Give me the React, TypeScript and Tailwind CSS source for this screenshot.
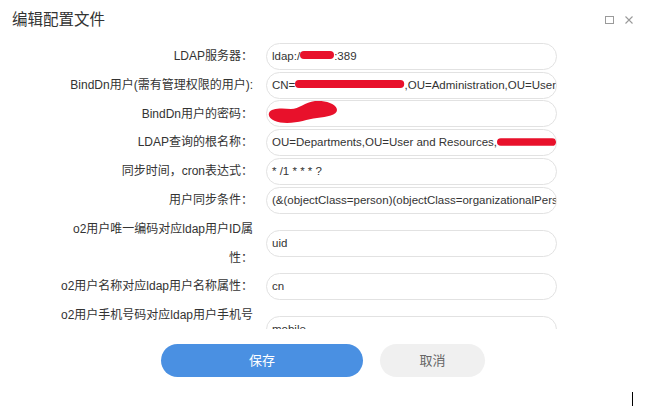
import type { ReactNode } from "react";

type Field = {
  label: string;
  value: ReactNode;
};

const Redact = ({ w }: { w: number }) => (
  <svg width={w} height="10" viewBox={`0 0 ${w} 10`} className="inline-block align-middle -mt-[2px]">
    <rect x="0" y="1" width={w} height="8" rx="4" fill="#e8112b" />
  </svg>
);

const Swoosh = () => (
  <svg width="72" height="26" viewBox="0 0 72 26" className="absolute left-[0px] top-[-2px]">
    <path
      d="M2 14 C 4 9, 14 9, 24 10 C 32 10, 38 3, 48 2 C 58 1, 70 5, 70 11 C 70 16, 60 18, 50 19 C 40 20, 32 24, 20 24 C 10 24, 0 20, 2 14 Z"
      fill="#e8112b"
    />
  </svg>
);

const FIELDS: Field[] = [
  {
    label: "LDAP服务器：",
    value: (
      <>
        ldap:/<Redact w={34} />:389
      </>
    ),
  },
  {
    label: "BindDn用户(需有管理权限的用户):",
    value: (
      <>
        CN=<Redact w={111} />,OU=Administration,OU=User
      </>
    ),
  },
  { label: "BindDn用户的密码：", value: <Swoosh /> },
  {
    label: "LDAP查询的根名称：",
    value: (
      <>
        OU=Departments,OU=User and Resources,<Redact w={62} />
      </>
    ),
  },
  { label: "同步时间，cron表达式：", value: "* /1 * * * ?" },
  {
    label: "用户同步条件：",
    value: "(&(objectClass=person)(objectClass=organizationalPerson))",
  },
  { label: "o2用户唯一编码对应ldap用户ID属性：", value: "uid" },
  { label: "o2用户名称对应ldap用户名称属性：", value: "cn" },
  { label: "o2用户手机号码对应ldap用户手机号码属性：", value: "mobile" },
  { label: "o2用户邮件对应ldap用户邮件属性：", value: "mail" },
];

function FormRow({ label, value }: Field) {
  return (
    <div className="flex items-center">
      <div className="w-[194px] ml-[59px] text-right text-[12px] leading-[28.8px] text-[#333]">
        {label}
      </div>
      <div className="relative ml-[13px] w-[291px] h-[27px] border border-[#e2e2e2] rounded-full overflow-hidden pl-[5px] flex items-center whitespace-nowrap text-[11.5px] text-[#333]">
        {value}
      </div>
    </div>
  );
}

export default function App() {
  return (
    <div className="relative w-[662px] h-[417px] bg-white overflow-hidden font-['Liberation_Sans','Noto_Sans_CJK_SC',sans-serif]">
      <div className="flex items-center h-[40px] pl-[12px] pr-[29px]">
        <span className="text-[15.5px] text-[#333]">编辑配置文件</span>
        <div className="ml-auto flex items-center gap-[11px]">
          <svg width="9" height="8" viewBox="0 0 9 8">
            <rect x="0.5" y="0.5" width="8" height="7" fill="none" stroke="#9a9a9a" />
          </svg>
          <svg width="8" height="8" viewBox="0 0 8 8">
            <path d="M0.5 0.5 L7.5 7.5 M7.5 0.5 L0.5 7.5" stroke="#9a9a9a" strokeWidth="1.1" />
          </svg>
        </div>
      </div>

      <div className="mt-[2px] h-[287px] overflow-hidden">
        {FIELDS.map((f) => (
          <FormRow key={f.label} {...f} />
        ))}
      </div>

      <div className="flex mt-[15px] pl-[161px] gap-[17px]">
        <button className="w-[202px] h-[33px] rounded-full bg-[#4a90e2] text-white text-[13px]">
          保存
        </button>
        <button className="w-[105px] h-[33px] rounded-full bg-[#f0f0f0] text-[#666] text-[13px]">
          取消
        </button>
      </div>

      <div className="absolute left-[632px] top-[392px] w-px h-[14px] bg-black" />
    </div>
  );
}
